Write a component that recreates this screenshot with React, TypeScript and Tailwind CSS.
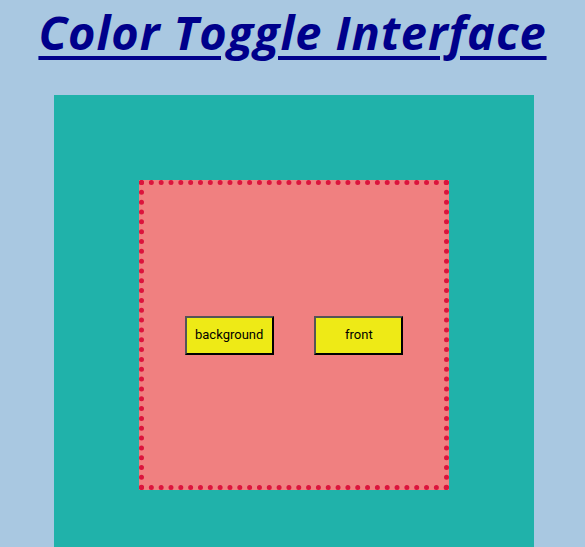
export default function App() {
  return (
    <div className="min-h-[547px] bg-[#a9c8e1] pt-[2px]">
      <h1 className="text-center font-['Open_Sans',sans-serif] text-[47px] font-bold italic leading-[60px] tracking-[0.9px] text-[#00008b] underline decoration-[4px] underline-offset-[6px]">
        Color Toggle Interface
      </h1>
      <div className="ml-[54px] mt-[33px] h-[480px] w-[480px] bg-[#20b2aa] p-[85px]">
        <div className="flex h-[310px] w-[310px] items-center justify-evenly border-[5px] border-dotted border-[#dc143c] bg-[#f08080]">
          <button className="h-[39px] w-[89px] border-2 border-[#555] border-b-black border-r-black bg-[#eeea16] font-['Roboto',sans-serif] text-[13px] text-black">
            background
          </button>
          <button className="h-[39px] w-[89px] border-2 border-[#555] border-b-black border-r-black bg-[#eeea16] font-['Roboto',sans-serif] text-[13px] text-black">
            front
          </button>
        </div>
      </div>
    </div>
  );
}
